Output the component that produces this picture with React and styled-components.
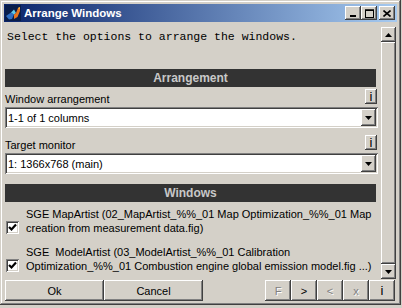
import React from "react";
import styled, { createGlobalStyle } from "styled-components";

const GlobalStyle = createGlobalStyle`
  html, body {
    margin: 0;
    padding: 0;
    background: #d4d0c8;
  }
  body {
    font-family: "Liberation Sans", Arial, sans-serif;
  }
`;

const raised = `
  background: #d4d0c8;
  box-shadow: inset -1px -1px 0 #404040, inset 1px 1px 0 #ffffff, inset -2px -2px 0 #808080;
`;

const sunken = `
  box-shadow: inset 1px 1px 0 #808080, inset -1px -1px 0 #ffffff, inset 2px 2px 0 #404040, inset -2px -2px 0 #d4d0c8;
`;

const Frame = styled.div`
  width: 401px;
  height: 305px;
  box-sizing: border-box;
  padding: 4px;
  display: flex;
  flex-direction: column;
  background: #d4d0c8;
  box-shadow: inset -1px -1px 0 #404040, inset 1px 1px 0 #d4d0c8, inset -2px -2px 0 #808080, inset 2px 2px 0 #ffffff;
`;

const TitleBar = styled.div`
  height: 18px;
  display: flex;
  align-items: center;
  padding: 0 2px 0 1px;
  background: linear-gradient(to right, #0a246a, #a6caf0);
`;

const TitleText = styled.span`
  flex: 1;
  margin-left: 3px;
  color: #ffffff;
  font-weight: bold;
  font-size: 11.5px;
  white-space: nowrap;
`;

const CaptionButton = styled.div`
  width: 16px;
  height: 14px;
  margin-left: ${(p) => p.$gap || 0}px;
  display: flex;
  align-items: center;
  justify-content: center;
  ${raised}
`;

const Body = styled.div`
  flex: 1;
  display: flex;
  flex-direction: column;
`;

const Main = styled.div`
  height: 258px;
  display: flex;
`;

const Content = styled.div`
  width: 373px;
  margin-left: 1px;
  display: flex;
  flex-direction: column;
`;

const Intro = styled.div`
  margin-top: 8px;
  padding-left: 2px;
  font-family: "Liberation Mono", "Courier New", monospace;
  font-size: 11.5px;
  line-height: 14px;
  color: #000;
  white-space: pre;
`;

const SectionHeader = styled.div`
  margin-top: ${(p) => p.$top}px;
  margin-right: 2px;
  height: 18px;
  display: flex;
  align-items: center;
  justify-content: center;
  background: #333333;
  color: #c8c8c8;
  font-weight: bold;
  font-size: 12px;
`;

const Group = styled.div`
  margin-top: ${(p) => p.$top}px;
`;

const LabelRow = styled.div`
  height: 18px;
  display: flex;
  justify-content: space-between;
  align-items: flex-start;
`;

const Label = styled.span`
  margin-top: 4px;
  font-size: 11px;
  line-height: 12px;
  color: #000;
`;

const InfoButton = styled.div`
  width: 12px;
  height: 15px;
  margin-right: 1px;
  display: flex;
  align-items: center;
  justify-content: center;
  font-size: 13px;
  color: #000;
  ${raised}
`;

const Select = styled.div`
  height: 21px;
  box-sizing: border-box;
  padding: 2px;
  display: flex;
  align-items: center;
  background: #ffffff;
  ${sunken}
`;

const SelectText = styled.span`
  flex: 1;
  padding-left: 1px;
  font-size: 11px;
  color: #000;
`;

const DropButton = styled.div`
  width: 15px;
  height: 17px;
  display: flex;
  align-items: center;
  justify-content: center;
  ${raised}
`;

const Item = styled.div`
  margin-top: ${(p) => p.$top}px;
  display: flex;
  align-items: flex-end;
`;

const CheckBox = styled.div`
  width: 13px;
  height: 13px;
  flex-shrink: 0;
  margin: 0 7px 1px 1px;
  display: flex;
  align-items: center;
  justify-content: center;
  background: #ffffff;
  ${sunken}
`;

const ItemText = styled.div`
  font-size: 11px;
  line-height: 14px;
  color: #000;
  white-space: pre;
`;

const Scrollbar = styled.div`
  width: 15px;
  height: 252px;
  margin: 5px 0 0 3px;
  display: flex;
  flex-direction: column;
`;

const ScrollButton = styled.div`
  height: 15px;
  display: flex;
  align-items: center;
  justify-content: center;
  ${raised}
`;

const ScrollThumb = styled.div`
  flex: 1;
  ${raised}
`;

const ButtonRow = styled.div`
  height: 21px;
  display: flex;
  padding: 0 2px 0 1px;
`;

const Spacer = styled.div`
  flex: 1;
`;

const PushButton = styled.div`
  width: ${(p) => p.$w}px;
  display: flex;
  align-items: center;
  justify-content: center;
  font-size: ${(p) => p.$size || 11}px;
  color: ${(p) => (p.$disabled ? "#808080" : "#000")};
  text-shadow: ${(p) => (p.$disabled ? "1px 1px 0 #ffffff" : "none")};
  ${raised}
`;

const Arrow = ({ up }) => (
  <svg width="7" height="4" viewBox="0 0 7 4">
    <polygon points={up ? "0,4 7,4 3.5,0" : "0,0 7,0 3.5,4"} fill="#000" />
  </svg>
);

const MatlabIcon = () => (
  <svg width="16" height="16" viewBox="0 0 16 16">
    <rect width="16" height="16" fill="#0a1e4a" />
    <polygon points="1,11 6,7.5 9,9.5 7,14 4,14.5" fill="#2f6fc4" />
    <polygon points="6,7.5 9,4.5 11,8 9,9.5" fill="#5ec8e8" />
    <polygon points="9,9.5 11,8 13,3 15,2 15,6 12.5,12 9,14" fill="#e8741e" />
    <polygon points="13,3 15,2 14.5,4.5" fill="#f7c04a" />
  </svg>
);

const Check = () => (
  <svg width="9" height="9" viewBox="0 0 9 9">
    <polyline points="1,4 3.5,6.5 8,1.5" fill="none" stroke="#000" strokeWidth="2.2" />
  </svg>
);

const App = () => (
  <>
    <GlobalStyle />
    <Frame>
      <TitleBar>
        <MatlabIcon />
        <TitleText>Arrange Windows</TitleText>
        <CaptionButton>
          <svg width="8" height="8" viewBox="0 0 8 8">
            <rect x="1" y="6" width="6" height="2" fill="#000" />
          </svg>
        </CaptionButton>
        <CaptionButton>
          <svg width="9" height="9" viewBox="0 0 9 9">
            <rect x="0.5" y="1" width="8" height="7.5" fill="none" stroke="#000" />
            <rect x="0" y="0.5" width="9" height="1.5" fill="#000" />
          </svg>
        </CaptionButton>
        <CaptionButton $gap={2}>
          <svg width="8" height="7" viewBox="0 0 8 7">
            <path d="M0.5 0.5 L7.5 6.5 M7.5 0.5 L0.5 6.5" stroke="#000" strokeWidth="1.6" />
          </svg>
        </CaptionButton>
      </TitleBar>
      <Body>
        <Main>
          <Content>
            <Intro>Select the options to arrange the windows.</Intro>
            <SectionHeader $top={25}>Arrangement</SectionHeader>
            <Group $top={2}>
              <LabelRow>
                <Label>Window arrangement</Label>
                <InfoButton>i</InfoButton>
              </LabelRow>
              <Select>
                <SelectText>1-1 of 1 columns</SelectText>
                <DropButton>
                  <Arrow />
                </DropButton>
              </Select>
            </Group>
            <Group $top={7}>
              <LabelRow>
                <Label>Target monitor</Label>
                <InfoButton>i</InfoButton>
              </LabelRow>
              <Select>
                <SelectText>1: 1366x768 (main)</SelectText>
                <DropButton>
                  <Arrow />
                </DropButton>
              </Select>
            </Group>
            <SectionHeader $top={10}>Windows</SectionHeader>
            <Item $top={5}>
              <CheckBox>
                <Check />
              </CheckBox>
              <ItemText>
                {"SGE MapArtist (02_MapArtist_%%_01 Map Optimization_%%_01 Map\ncreation from measurement data.fig)"}
              </ItemText>
            </Item>
            <Item $top={10}>
              <CheckBox>
                <Check />
              </CheckBox>
              <ItemText>
                {"SGE  ModelArtist (03_ModelArtist_%%_01 Calibration\nOptimization_%%_01 Combustion engine global emission model.fig ...)"}
              </ItemText>
            </Item>
          </Content>
          <Scrollbar>
            <ScrollButton>
              <Arrow up />
            </ScrollButton>
            <ScrollThumb />
            <ScrollButton>
              <Arrow />
            </ScrollButton>
          </Scrollbar>
        </Main>
        <ButtonRow>
          <PushButton $w={99}>Ok</PushButton>
          <PushButton $w={99}>Cancel</PushButton>
          <Spacer />
          <PushButton $w={26} $disabled>F</PushButton>
          <PushButton $w={26}>&gt;</PushButton>
          <PushButton $w={26} $disabled>&lt;</PushButton>
          <PushButton $w={26} $disabled>x</PushButton>
          <PushButton $w={26} $size={13}>i</PushButton>
        </ButtonRow>
      </Body>
    </Frame>
  </>
);

export default App;
